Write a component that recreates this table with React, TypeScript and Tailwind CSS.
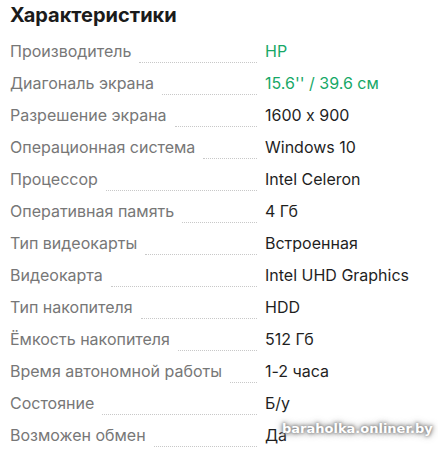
import React from "react";

const rows: { label: string; value: string; green?: boolean }[] = [
  { label: "Производитель", value: "HP", green: true },
  { label: "Диагональ экрана", value: "15.6'' / 39.6 см", green: true },
  { label: "Разрешение экрана", value: "1600 x 900" },
  { label: "Операционная система", value: "Windows 10" },
  { label: "Процессор", value: "Intel Celeron" },
  { label: "Оперативная память", value: "4 Гб" },
  { label: "Тип видеокарты", value: "Встроенная" },
  { label: "Видеокарта", value: "Intel UHD Graphics" },
  { label: "Тип накопителя", value: "HDD" },
  { label: "Ёмкость накопителя", value: "512 Гб" },
  { label: "Время автономной работы", value: "1-2 часа" },
  { label: "Состояние", value: "Б/у" },
  { label: "Возможен обмен", value: "Да" },
];

export default function App() {
  return (
    <div
      className="relative w-[438px] h-[450px] overflow-hidden bg-white pl-[10px]"
      style={{ fontFamily: "Inter, 'Noto Sans', sans-serif", fontFeatureSettings: '"calt" 0' }}
    >
      <div className="h-[35px] pt-[1px] text-[20px] leading-[28px] font-bold text-[#1b1b1b]">
        Характеристики
      </div>
      {rows.map((r) => (
        <div key={r.label} className="flex items-start h-8">
          <div className="flex w-[247px] items-start">
            <span className="text-[16px] leading-8 text-[#777] whitespace-nowrap">{r.label}</span>
            <div className="ml-2 flex-1 h-[28px] border-b border-dotted border-[#c8c8c8]" />
          </div>
          <div
            className={`ml-2 text-[16px] leading-8 whitespace-nowrap ${
              r.green ? "text-[#17a867]" : "text-[#1f1f1f]"
            }`}
          >
            {r.value}
          </div>
        </div>
      ))}
      <div
        className="absolute left-[282px] top-[419px] text-[13px] font-bold text-white leading-5"
        style={{
          fontFamily: "'DejaVu Sans', Verdana, sans-serif",
          textShadow: "0 0 3px #777, 0 0 5px #888, 0 0 8px #999",
        }}
      >
        baraholka.onliner.by
      </div>
    </div>
  );
}
